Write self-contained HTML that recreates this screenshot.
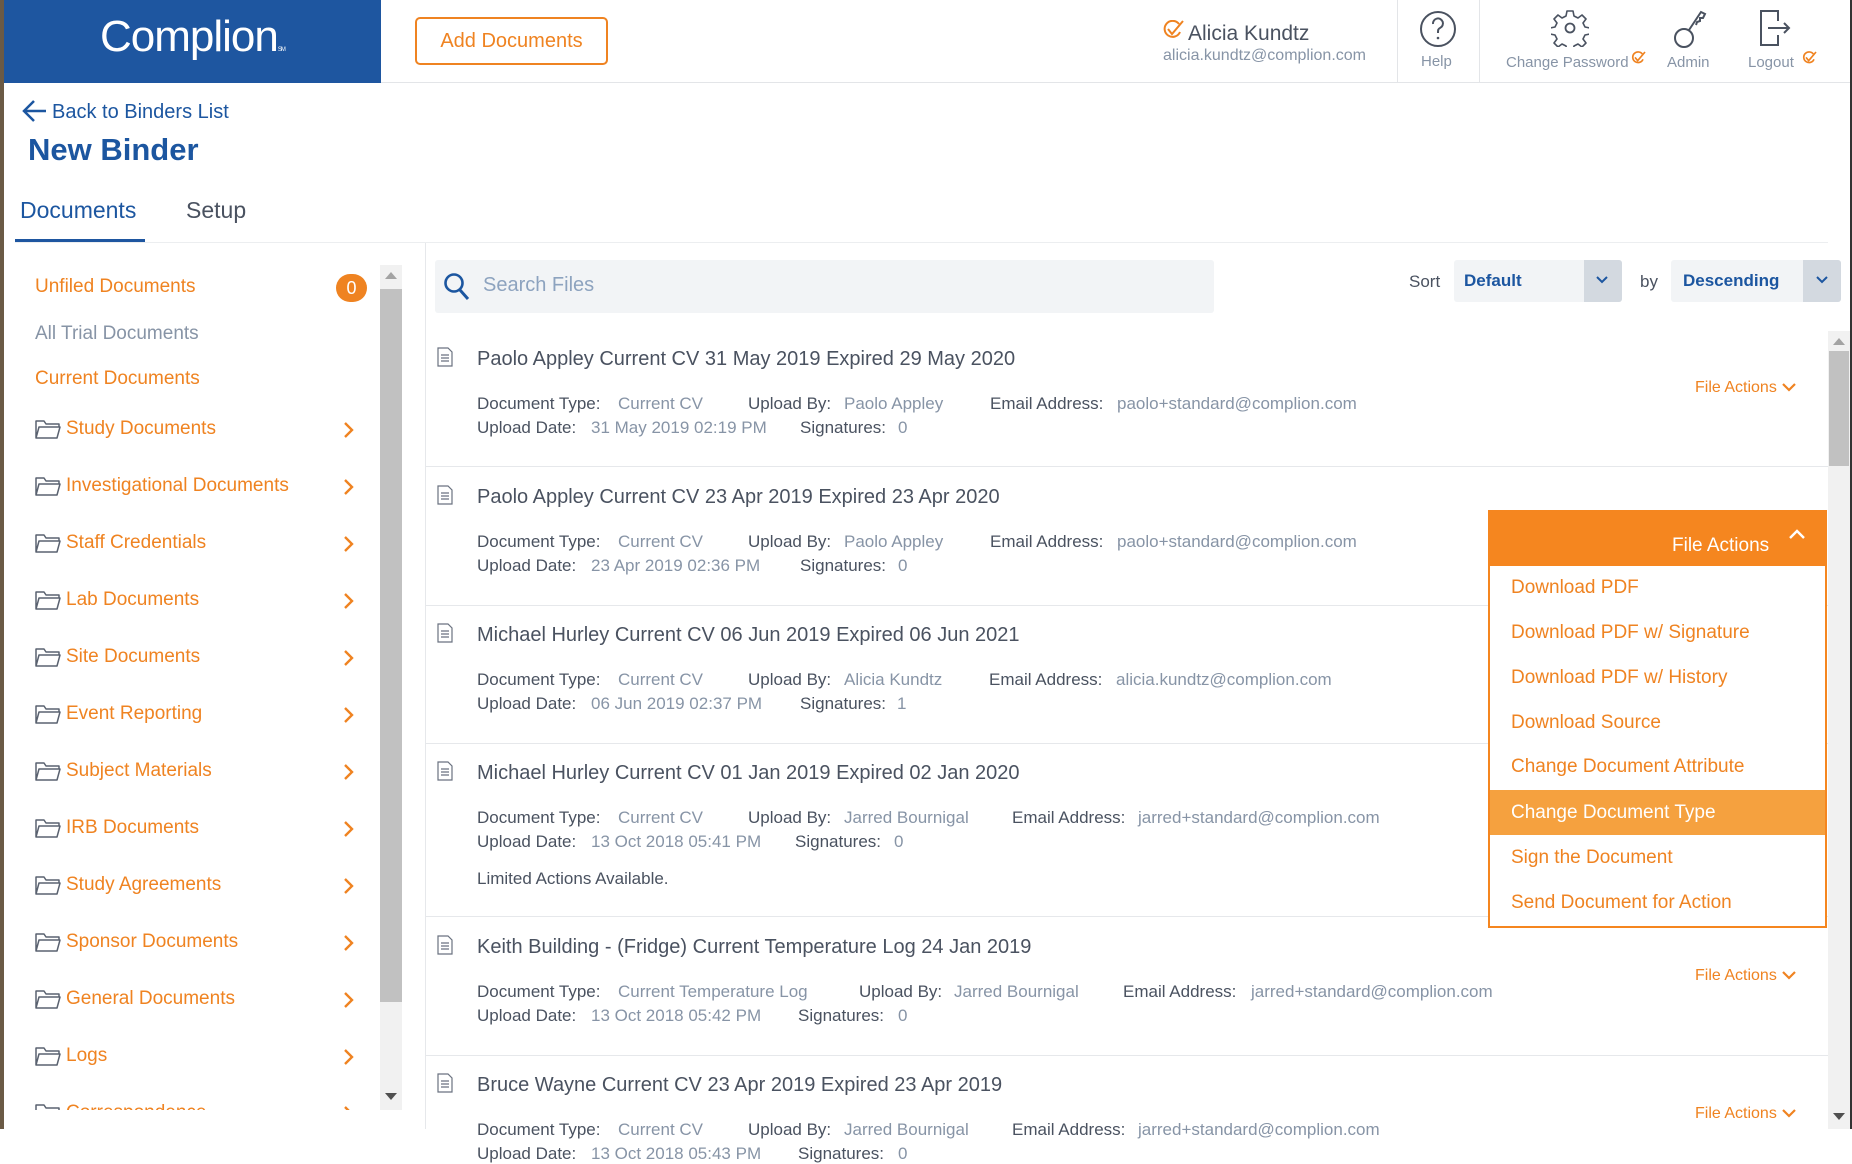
<!DOCTYPE html>
<html><head><meta charset="utf-8"><style>
*{margin:0;padding:0;box-sizing:border-box}
body{width:1852px;height:1129px;overflow:hidden;background:#fff;font-family:"Liberation Sans",sans-serif;position:relative;color:#4a5260}
.a{position:absolute;white-space:nowrap}
.o{color:#ef8321}
.b{color:#1c56a0}
.lab{color:#4a5260;font-size:17px}
.val{color:#8794a6;font-size:17px}
.title{font-size:20px;color:#4a5260}
.side{font-size:19px;color:#ef8321}
.hl{position:absolute;left:425px;width:1403px;height:1px;background:#e6e8eb}
.fa{position:absolute;left:1695px;font-size:16px;color:#ef8321}
.di{position:absolute;left:1511px;font-size:19px;color:#ef8321}
</style></head><body>
<div class="a" style="left:0;top:0;width:4px;height:1129px;background:#6b5a45"></div>
<div class="a" style="left:4px;top:0;width:377px;height:83px;background:#1e56a0"></div>
<div class="a" style="left:100px;top:12px;font-size:44px;color:#fff;letter-spacing:-1px">Complion<span style="font-size:6px">SM</span></div>
<div class="a" style="left:415px;top:17px;width:193px;height:48px;border:2px solid #ef8321;border-radius:5px;color:#ef8321;font-size:20px;text-align:center;line-height:44px">Add Documents</div>
<div class="a" style="left:381px;top:82px;width:1471px;height:1px;background:#e3e5e8"></div>
<svg class="a" style="left:1162px;top:20px" width="24" height="20" viewBox="0 0 24 20"><path d="M17 4A8 8 0 1 0 18 12" fill="none" stroke="#ef8321" stroke-width="2"/><path d="M6 9l4 5 11-13" fill="none" stroke="#ef8321" stroke-width="2"/></svg>
<div class="a" style="left:1188px;top:22px;font-size:21px;color:#4a5260">Alicia Kundtz</div>
<div class="a" style="left:1163px;top:47px;font-size:16px;color:#8794a6">alicia.kundtz@complion.com</div>
<div class="a" style="left:1397px;top:0;width:1px;height:83px;background:#e3e5e8"></div>
<div class="a" style="left:1479px;top:0;width:1px;height:83px;background:#e3e5e8"></div>
<svg class="a" style="left:1419px;top:10px" width="38" height="38" viewBox="0 0 38 38"><circle cx="19" cy="19" r="17" fill="none" stroke="#4a5260" stroke-width="2"/><path d="M14 14a5 5 0 1 1 7 4c-2 1-2 2-2 5" fill="none" stroke="#4a5260" stroke-width="2"/><circle cx="19" cy="28" r="1.3" fill="#4a5260"/></svg>
<div class="a" style="left:1421px;top:53px;font-size:15px;color:#8794a6">Help</div>
<svg class="a" style="left:1551px;top:9px" width="38" height="38" viewBox="0 0 38 38"><path d="M16 2h6l1 5 4 2 4-3 4 4-3 4 2 4 5 1v6l-5 1-2 4 3 4-4 4-4-3-4 2-1 5h-6l-1-5-4-2-4 3-4-4 3-4-2-4-5-1v-6l5-1 2-4-3-4 4-4 4 3 4-2z" fill="none" stroke="#4a5260" stroke-width="1.6" stroke-linejoin="round"/><circle cx="19" cy="19" r="4.5" fill="none" stroke="#4a5260" stroke-width="1.8"/></svg>
<div class="a" style="left:1506px;top:54px;font-size:15px;color:#8794a6">Change Password</div>
<svg class="a" style="left:1631px;top:51px" width="16" height="14" viewBox="0 0 24 20"><path d="M17 4A8 8 0 1 0 18 12" fill="none" stroke="#ef8321" stroke-width="2.5"/><path d="M6 9l4 5 11-13" fill="none" stroke="#ef8321" stroke-width="2.5"/></svg>
<svg class="a" style="left:1673px;top:9px" width="34" height="40" viewBox="0 0 34 40"><circle cx="11" cy="29" r="9" fill="none" stroke="#4a5260" stroke-width="2"/><path d="M16 21l12-18 4 2-2 4-3 0 0 3-3 1 -1 3" fill="none" stroke="#4a5260" stroke-width="2"/></svg>
<div class="a" style="left:1667px;top:54px;font-size:15px;color:#8794a6">Admin</div>
<svg class="a" style="left:1758px;top:9px" width="34" height="38" viewBox="0 0 34 38"><path d="M20 12V2H3v34h17V26" fill="none" stroke="#4a5260" stroke-width="2"/><path d="M10 19h20M26 14l5 5-5 5" fill="none" stroke="#4a5260" stroke-width="2"/></svg>
<div class="a" style="left:1748px;top:54px;font-size:15px;color:#8794a6">Logout</div>
<svg class="a" style="left:1802px;top:51px" width="16" height="14" viewBox="0 0 24 20"><path d="M17 4A8 8 0 1 0 18 12" fill="none" stroke="#ef8321" stroke-width="2.5"/><path d="M6 9l4 5 11-13" fill="none" stroke="#ef8321" stroke-width="2.5"/></svg>
<div class="a" style="left:1850px;top:0;width:2px;height:1129px;background:#333"></div>

<svg class="a" style="left:22px;top:99px" width="26" height="24" viewBox="0 0 26 24"><path d="M24 12H3M12 2L2 12l10 10" fill="none" stroke="#1c56a0" stroke-width="2.5"/></svg>
<div class="a b" style="left:52px;top:101px;font-size:20px">Back to Binders List</div>
<div class="a b" style="left:28px;top:132px;font-size:31px;font-weight:bold">New Binder</div>
<div class="a b" style="left:20px;top:197px;font-size:23px">Documents</div>
<div class="a" style="left:186px;top:197px;font-size:23px;color:#4a5260">Setup</div>
<div class="a" style="left:15px;top:239px;width:130px;height:4px;background:#1e56a0"></div>
<div class="a" style="left:15px;top:242px;width:1813px;height:1px;background:#eceef0"></div>

<div class="a side" style="left:35px;top:276px">Unfiled Documents</div>
<div class="a" style="left:336px;top:274px;width:31px;height:28px;border-radius:14px;background:#ef8321;color:#fff;font-size:18px;text-align:center;line-height:28px">0</div>
<div class="a side" style="left:35px;top:323px;color:#8794a6">All Trial Documents</div>
<div class="a side" style="left:35px;top:368px">Current Documents</div>
<div id="folders"></div>
<div class="a" style="left:4px;top:1110px;width:421px;height:19px;background:#fff"></div>
<div class="a" style="left:380px;top:265px;width:22px;height:845px;background:#f1f1f1"></div>
<div class="a" style="left:380px;top:289px;width:22px;height:713px;background:#c1c1c1"></div>
<div class="a" style="left:385px;top:272px;width:0;height:0;border-left:6px solid transparent;border-right:6px solid transparent;border-bottom:7px solid #a3a3a3"></div>
<div class="a" style="left:385px;top:1093px;width:0;height:0;border-left:6px solid transparent;border-right:6px solid transparent;border-top:7px solid #505050"></div>
<div class="a" style="left:425px;top:243px;width:1px;height:886px;background:#e6e8eb"></div>

<div class="a" style="left:435px;top:260px;width:779px;height:53px;background:#f2f4f6;border-radius:3px"></div>
<svg class="a" style="left:443px;top:272px" width="28" height="30" viewBox="0 0 28 30"><circle cx="11" cy="11" r="8.5" fill="none" stroke="#1c56a0" stroke-width="2.6"/><path d="M17 18l8 9" stroke="#1c56a0" stroke-width="3"/></svg>
<div class="a" style="left:483px;top:274px;font-size:20px;color:#8da3bf">Search Files</div>
<div class="a" style="left:1409px;top:272px;font-size:17px;color:#4a5260">Sort</div>
<div class="a" style="left:1454px;top:260px;width:168px;height:42px;background:#f2f4f6;border-radius:3px;overflow:hidden"><div class="a" style="right:0;top:0;width:38px;height:42px;background:#d3d9e0"></div></div>
<div class="a b" style="left:1464px;top:271px;font-size:17px;font-weight:bold">Default</div>
<svg class="a" style="left:1595px;top:275px" width="14" height="10"><path d="M2 2l5 5 5-5" fill="none" stroke="#1c56a0" stroke-width="2"/></svg>
<div class="a" style="left:1640px;top:272px;font-size:17px;color:#4a5260">by</div>
<div class="a" style="left:1671px;top:260px;width:170px;height:42px;background:#f2f4f6;border-radius:3px;overflow:hidden"><div class="a" style="right:0;top:0;width:38px;height:42px;background:#d3d9e0"></div></div>
<div class="a b" style="left:1683px;top:271px;font-size:17px;font-weight:bold">Descending</div>
<svg class="a" style="left:1815px;top:275px" width="14" height="10"><path d="M2 2l5 5 5-5" fill="none" stroke="#1c56a0" stroke-width="2"/></svg>

<div id="rows"></div>

<div class="a" style="left:1828px;top:331px;width:22px;height:798px;background:#f1f1f1"></div>
<div class="a" style="left:1829px;top:351px;width:20px;height:115px;background:#c1c1c1"></div>
<div class="a" style="left:1833px;top:338px;border-left:6px solid transparent;border-right:6px solid transparent;border-bottom:7px solid #a3a3a3"></div>
<div class="a" style="left:1833px;top:1113px;border-left:6px solid transparent;border-right:6px solid transparent;border-top:7px solid #505050"></div>

<div class="hl" style="top:466px"></div><div class="hl" style="top:605px"></div><div class="hl" style="top:743px"></div><div class="hl" style="top:916px"></div><div class="hl" style="top:1055px"></div>

<div class="fa" style="top:379px">File Actions <svg width="16" height="10"><path d="M2 2l6 6 6-6" fill="none" stroke="#ef8321" stroke-width="2.2"/></svg></div>
<div class="fa" style="top:967px">File Actions <svg width="16" height="10"><path d="M2 2l6 6 6-6" fill="none" stroke="#ef8321" stroke-width="2.2"/></svg></div>
<div class="fa" style="top:1105px">File Actions <svg width="16" height="10"><path d="M2 2l6 6 6-6" fill="none" stroke="#ef8321" stroke-width="2.2"/></svg></div>

<div class="a" style="left:1488px;top:510px;width:339px;height:418px;background:#fff;border:2px solid #f5861f"></div>
<div class="a" style="left:1488px;top:510px;width:339px;height:56px;background:#f5861f"></div>
<div class="a" style="left:1672px;top:535px;font-size:19px;color:#fff">File Actions</div>
<svg class="a" style="left:1788px;top:528px" width="18" height="12"><path d="M2 10l7-7 7 7" fill="none" stroke="#fff" stroke-width="2.4"/></svg>
<div class="a" style="left:1490px;top:790px;width:335px;height:45px;background:#f5a13f"></div>
<div class="di" style="top:577px">Download PDF</div>
<div class="di" style="top:622px">Download PDF w/ Signature</div>
<div class="di" style="top:667px">Download PDF w/ History</div>
<div class="di" style="top:712px">Download Source</div>
<div class="di" style="top:756px">Change Document Attribute</div>
<div class="di" style="top:802px;color:#fff">Change Document Type</div>
<div class="di" style="top:847px">Sign the Document</div>
<div class="di" style="top:892px">Send Document for Action</div>

<script>
var f=["Study Documents","Investigational Documents","Staff Credentials","Lab Documents","Site Documents","Event Reporting","Subject Materials","IRB Documents","Study Agreements","Sponsor Documents","General Documents","Logs","Correspondence"];
var h="";
f.forEach(function(n,i){var y=418+i*57;
h+='<svg class="a" style="left:35px;top:'+(y)+'px" width="26" height="22" viewBox="0 0 26 22"><path d="M1 20V3h8l2 3h13v3M1 20l3-11h21l-3 11z" fill="none" stroke="#5a6270" stroke-width="1.5" stroke-linejoin="round"/></svg>';
h+='<div class="a side" style="left:66px;top:'+(y)+'px">'+n+'</div>';
h+='<svg class="a" style="left:343px;top:'+(y+3)+'px" width="12" height="18"><path d="M2 2l7 7-7 7" fill="none" stroke="#ef8321" stroke-width="2.4"/></svg>';});
document.getElementById("folders").outerHTML=h;
var r=[
[359,"Paolo Appley Current CV 31 May 2019 Expired 29 May 2020","Current CV",748,844,"Paolo Appley",990,1117,"paolo+standard@complion.com",591,"31 May 2019 02:19 PM",800,898,"0"],
[497,"Paolo Appley Current CV 23 Apr 2019 Expired 23 Apr 2020","Current CV",748,844,"Paolo Appley",990,1117,"paolo+standard@complion.com",591,"23 Apr 2019 02:36 PM",800,898,"0"],
[635,"Michael Hurley Current CV 06 Jun 2019 Expired 06 Jun 2021","Current CV",748,844,"Alicia Kundtz",989,1116,"alicia.kundtz@complion.com",591,"06 Jun 2019 02:37 PM",800,897,"1"],
[773,"Michael Hurley Current CV 01 Jan 2019 Expired 02 Jan 2020","Current CV",748,844,"Jarred Bournigal",1012,1138,"jarred+standard@complion.com",591,"13 Oct 2018 05:41 PM",795,894,"0"],
[947,"Keith Building - (Fridge) Current Temperature Log 24 Jan 2019","Current Temperature Log",859,954,"Jarred Bournigal",1123,1251,"jarred+standard@complion.com",591,"13 Oct 2018 05:42 PM",798,898,"0"],
[1085,"Bruce Wayne Current CV 23 Apr 2019 Expired 23 Apr 2019","Current CV",748,844,"Jarred Bournigal",1012,1138,"jarred+standard@complion.com",591,"13 Oct 2018 05:43 PM",798,898,"0"]];
h="";
r.forEach(function(d){var y=d[0];
h+='<svg class="a" style="left:437px;top:'+(y-12)+'px" width="16" height="20" viewBox="0 0 16 20"><path d="M1 1h10l4 4v14H1z" fill="none" stroke="#6a7280" stroke-width="1.2"/><path d="M4 8h8M4 11h8M4 14h8" stroke="#6a7280" stroke-width="1.2"/></svg>';
h+='<div class="a title" style="left:477px;top:'+(y-11)+'px">'+d[1]+'</div>';
var m=y+35;
h+='<div class="a lab" style="left:477px;top:'+m+'px">Document Type:</div><div class="a val" style="left:618px;top:'+m+'px">'+d[2]+'</div>';
h+='<div class="a lab" style="left:'+d[3]+'px;top:'+m+'px">Upload By:</div><div class="a val" style="left:'+d[4]+'px;top:'+m+'px">'+d[5]+'</div>';
h+='<div class="a lab" style="left:'+d[6]+'px;top:'+m+'px">Email Address:</div><div class="a val" style="left:'+d[7]+'px;top:'+m+'px">'+d[8]+'</div>';
m+=24;
h+='<div class="a lab" style="left:477px;top:'+m+'px">Upload Date:</div><div class="a val" style="left:'+d[9]+'px;top:'+m+'px">'+d[10]+'</div>';
h+='<div class="a lab" style="left:'+d[11]+'px;top:'+m+'px">Signatures:</div><div class="a val" style="left:'+d[12]+'px;top:'+m+'px">'+d[13]+'</div>';});
h+='<div class="a lab" style="left:477px;top:869px">Limited Actions Available.</div>';
document.getElementById("rows").outerHTML=h;
</script>
</body></html>
